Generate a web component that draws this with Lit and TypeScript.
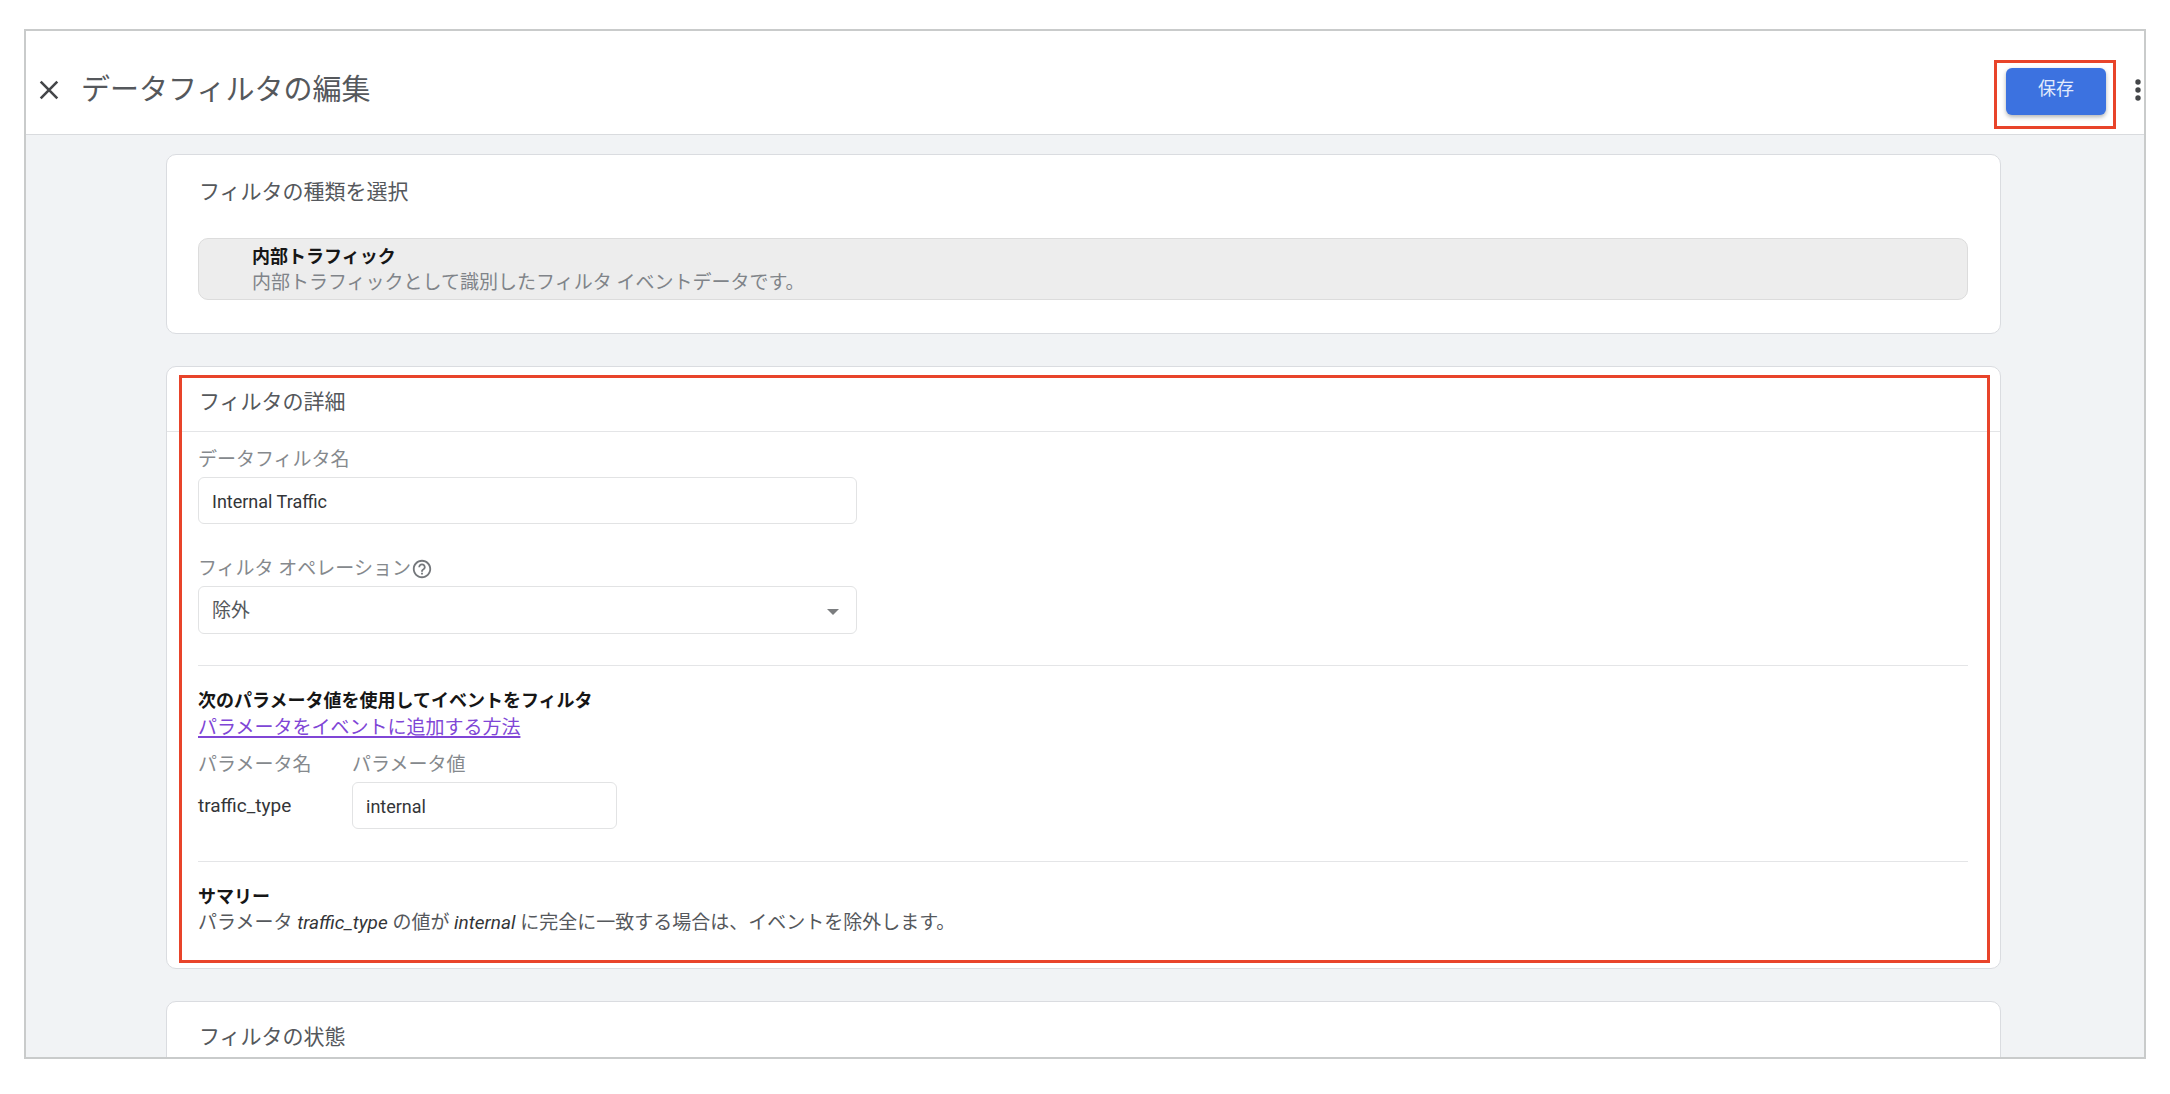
import { LitElement, html, css } from "lit";
import { customElement, state } from "lit/decorators.js";

@customElement("app-root")
export class AppRoot extends LitElement {
  @state() private filterName = "Internal Traffic";
  @state() private paramValue = "internal";

  static styles = css`
    :host {
      display: block;
      box-sizing: border-box;
      height: 100vh;
      padding: 29px 24px 35px;
      background: #fff;
      color: #55585c;
      font-family: Roboto, "Noto Sans CJK JP", sans-serif;
      font-size: 19px;
      line-height: 26px;
    }
    *,
    *::before {
      box-sizing: border-box;
    }
    h1,
    h2,
    h3,
    p {
      margin: 0;
      font-weight: 400;
    }
    .frame {
      display: flex;
      flex-direction: column;
      height: 100%;
      overflow: hidden;
      border: 2px solid #c9cbcb;
    }
    .bar {
      display: flex;
      flex: none;
      align-items: center;
      height: 104px;
      padding: 14px 0 0 11px;
      border-bottom: 1px solid #d9dbde;
      background: #fff;
    }
    .icon-button {
      display: flex;
      padding: 0;
      border: 0;
      background: none;
      color: #444649;
    }
    .title {
      flex: 1;
      padding-left: 20px;
      font-size: 29px;
      line-height: 40px;
    }
    .save-area {
      position: relative;
      margin: 4px 26px 0 0;
    }
    .save {
      display: block;
      width: 100px;
      height: 47px;
      padding: 0 0 6px;
      border: 0;
      border-radius: 6px;
      background: #3c72e0;
      box-shadow: 0 2px 4px rgba(60, 64, 67, 0.4);
      color: #e2ebfc;
      font: inherit;
      font-size: 18px;
    }
    .mark {
      position: absolute;
      border: 3px solid #e8442a;
      pointer-events: none;
    }
    .mark-save {
      inset: -8px -10px -14px -12px;
    }
    .mark-details {
      inset: 8px 10px 5px 12px;
    }
    .content {
      display: flex;
      flex: 1;
      flex-direction: column;
      gap: 32px;
      min-height: 0;
      padding: 19px 143px 0 140px;
      background: #f1f3f5;
    }
    .card {
      position: relative;
      flex: none;
      border: 1px solid #dadce0;
      border-radius: 10px;
      background: #fff;
    }
    .card-title {
      padding: 20px 32px 14px;
      font-size: 21px;
      line-height: 30px;
    }
    .lead {
      padding: 22px 32px 12px;
    }
    .ruled {
      border-bottom: 1px solid #e4e5e7;
    }
    .type-body {
      padding: 19px 32px 33px 31px;
    }
    .type {
      padding: 5px 53px 3px;
      border: 1px solid #dcdcdc;
      border-radius: 10px;
      background: #ededed;
      color: #808489;
    }
    .strong {
      color: #161616;
      font-size: 18px;
      font-weight: 700;
    }
    .details-body {
      padding: 15px 32px 32px 31px;
    }
    .field {
      display: flex;
      flex-direction: column;
      gap: 4px;
      max-width: 659px;
      margin-bottom: 32px;
    }
    .field:last-of-type {
      margin-bottom: 31px;
    }
    .label {
      display: flex;
      align-items: center;
      color: #85898d;
    }
    .help {
      display: block;
      color: #74777b;
    }
    .box {
      width: 100%;
      height: 47px;
      padding: 2px 13px 0;
      border: 1px solid #e2e3e4;
      border-radius: 6px;
      background: #fff;
      color: #333538;
      font: inherit;
      font-size: 18px;
      appearance: none;
    }
    .select {
      position: relative;
      display: block;
    }
    .select .box {
      display: block;
      height: 48px;
      font-size: 19px;
      color: #55585c;
    }
    .arrow {
      position: absolute;
      top: 23px;
      right: 18px;
      color: #7b7d7f;
      pointer-events: none;
    }
    .section {
      padding-top: 22px;
      border-top: 1px solid #e4e5e7;
    }
    .link {
      display: table;
      margin-top: 1px;
      color: #8046d6;
      text-decoration: underline;
      text-decoration-thickness: 2px;
      text-decoration-skip-ink: none;
      text-underline-offset: 2px;
    }
    .params {
      display: grid;
      grid-template-columns: 154px 265px;
      gap: 4px 0;
      align-items: center;
      padding: 11px 0 32px;
    }
    .value,
    em {
      color: #333538;
    }
  `;

  render() {
    return html`
      <div class="frame">
        <header class="bar">
          <button class="icon-button" aria-label="閉じる">
            <svg width="24" height="24" viewBox="0 0 24 24">
              <path d="M3.700 3.700l16.600 16.600M20.300 3.700L3.700 20.300" fill="none" stroke="currentColor" stroke-width="2.6" />
            </svg>
          </button>
          <h1 class="title">データフィルタの編集</h1>
          <div class="save-area">
            <button class="save">保存</button>
            <div class="mark mark-save"></div>
          </div>
          <button class="icon-button" aria-label="その他">
            <svg width="12" height="24" viewBox="0 0 12 24" fill="currentColor">
              <circle cx="6" cy="4" r="2.7" />
              <circle cx="6" cy="12" r="2.7" />
              <circle cx="6" cy="20" r="2.7" />
            </svg>
          </button>
        </header>

        <main class="content">
          <section class="card">
            <h2 class="card-title lead">フィルタの種類を選択</h2>
            <div class="type-body">
              <div class="type">
                <h3 class="strong">内部トラフィック</h3>
                <p>内部トラフィックとして識別したフィルタ イベントデータです。</p>
              </div>
            </div>
          </section>

          <section class="card">
            <h2 class="card-title ruled">フィルタの詳細</h2>
            <div class="details-body">
              <div class="field">
                <label class="label" for="name">データフィルタ名</label>
                <input
                  class="box"
                  id="name"
                  type="text"
                  .value=${this.filterName}
                  @input=${(e: Event) => (this.filterName = (e.target as HTMLInputElement).value)}
                />
              </div>
              <div class="field">
                <label class="label" for="operation">
                  フィルタ オペレーション<svg class="help" width="22" height="22" viewBox="0 0 24 24" fill="currentColor">
                    <path
                      d="M11 18h2v-2h-2v2zm1-16C6.48 2 2 6.48 2 12s4.48 10 10 10 10-4.48 10-10S17.52 2 12 2zm0 18c-4.41 0-8-3.59-8-8s3.59-8 8-8 8 3.590 8 8-3.590 8-8 8zm0-14c-2.210 0-4 1.790-4 4h2c0-1.100.9-2 2-2s2 .9 2 2c0 2-3 1.750-3 5h2c0-2.250 3-2.500 3-5 0-2.210-1.790-4-4-4z"
                    />
                  </svg>
                </label>
                <div class="select">
                  <select class="box" id="operation">
                    <option>除外</option>
                  </select>
                  <svg class="arrow" width="12" height="6" viewBox="0 0 12 6">
                    <path d="M0 0h12L6 6z" fill="currentColor" />
                  </svg>
                </div>
              </div>

              <section class="section">
                <h3 class="strong">次のパラメータ値を使用してイベントをフィルタ</h3>
                <a class="link" href="#">パラメータをイベントに追加する方法</a>
                <div class="params">
                  <span class="label">パラメータ名</span>
                  <label class="label" for="value">パラメータ値</label>
                  <span class="value">traffic_type</span>
                  <input
                    class="box"
                    id="value"
                    type="text"
                    .value=${this.paramValue}
                    @input=${(e: Event) => (this.paramValue = (e.target as HTMLInputElement).value)}
                  />
                </div>
              </section>

              <section class="section">
                <h3 class="strong">サマリー</h3>
                <p>パラメータ <em>traffic_type</em> の値が <em>internal</em> に完全に一致する場合は、イベントを除外します。</p>
              </section>
            </div>
            <div class="mark mark-details"></div>
          </section>

          <section class="card">
            <h2 class="card-title">フィルタの状態</h2>
          </section>
        </main>
      </div>
    `;
  }
}
